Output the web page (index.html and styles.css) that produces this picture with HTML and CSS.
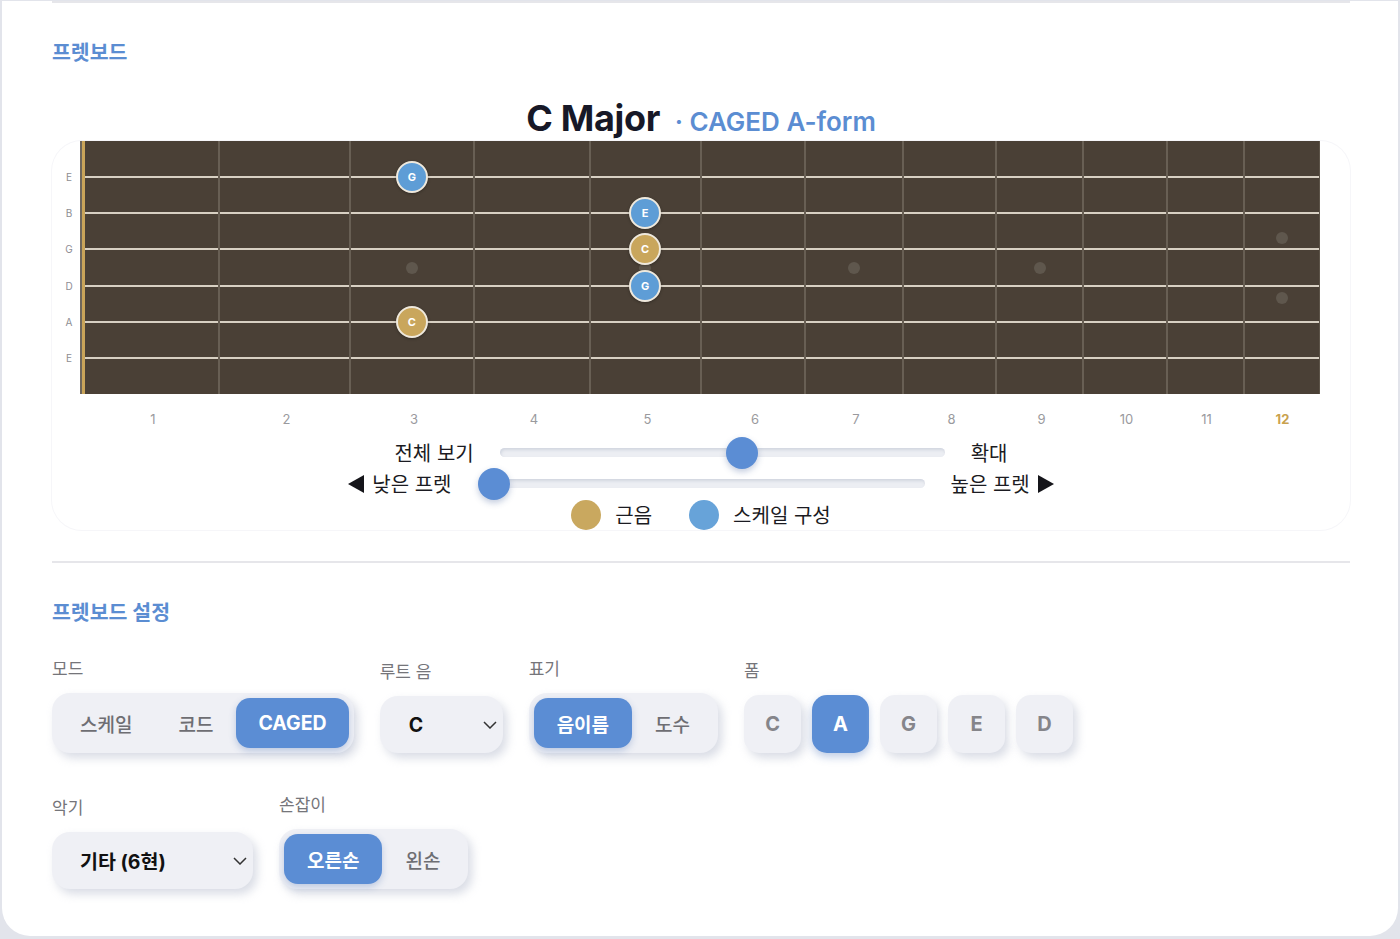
FILE: index.html
```html
<!DOCTYPE html>
<html lang="ko">
<head>
    <meta charset="UTF-8">
    <meta name="viewport" content="width=device-width, initial-scale=1.0">
    <title>프렛보드</title>
    <link rel="stylesheet" href="styles.css">
</head>
<body>
    <div class="card">
        <hr class="rule">

        <!-- Fretboard -->
        <h2 class="section-title">프렛보드</h2>
        <div class="chart-title">
            <span class="chart-name">C Major</span>
            <span class="chart-form">· CAGED A-form</span>
        </div>

        <div class="neck-panel">
            <div class="neck">
                <div class="string-names">
                    <span>E</span><span>B</span><span>G</span><span>D</span><span>A</span><span>E</span>
                </div>
                <div class="board">
                    <div class="nut"></div>
                    <div class="fret" style="flex-grow: 136"><i></i><i></i><i></i><i></i><i></i><i></i></div>
                    <div class="fret" style="flex-grow: 131"><i></i><i></i><i></i><i></i><i></i><i></i></div>
                    <div class="fret inlay" style="flex-grow: 124">
                        <i><b class="note scale">G</b></i><i></i><i></i><i></i><i><b class="note root">C</b></i><i></i>
                    </div>
                    <div class="fret" style="flex-grow: 116"><i></i><i></i><i></i><i></i><i></i><i></i></div>
                    <div class="fret inlay" style="flex-grow: 111">
                        <i></i><i><b class="note scale">E</b></i><i><b class="note root">C</b></i><i><b class="note scale">G</b></i><i></i><i></i>
                    </div>
                    <div class="fret" style="flex-grow: 104"><i></i><i></i><i></i><i></i><i></i><i></i></div>
                    <div class="fret inlay" style="flex-grow: 98"><i></i><i></i><i></i><i></i><i></i><i></i></div>
                    <div class="fret" style="flex-grow: 93"><i></i><i></i><i></i><i></i><i></i><i></i></div>
                    <div class="fret inlay" style="flex-grow: 87"><i></i><i></i><i></i><i></i><i></i><i></i></div>
                    <div class="fret" style="flex-grow: 83"><i></i><i></i><i></i><i></i><i></i><i></i></div>
                    <div class="fret" style="flex-grow: 77"><i></i><i></i><i></i><i></i><i></i><i></i></div>
                    <div class="fret double" style="flex-grow: 75"><i></i><i></i><i></i><i></i><i></i><i></i></div>
                </div>
            </div>

            <div class="fret-nums">
                <span style="flex-grow: 136">1</span>
                <span style="flex-grow: 131">2</span>
                <span style="flex-grow: 124">3</span>
                <span style="flex-grow: 116">4</span>
                <span style="flex-grow: 111">5</span>
                <span style="flex-grow: 104">6</span>
                <span style="flex-grow: 98">7</span>
                <span style="flex-grow: 93">8</span>
                <span style="flex-grow: 87">9</span>
                <span style="flex-grow: 83">10</span>
                <span style="flex-grow: 77">11</span>
                <span class="octave" style="flex-grow: 75">12</span>
            </div>

            <div class="slider-row">
                <span>전체 보기</span>
                <div class="track zoom"><div class="thumb" style="--v: 0.547"></div></div>
                <span>확대</span>
            </div>
            <div class="slider-row">
                <span class="arrow-label">
                    <svg width="16" height="18" viewBox="0 0 16 18"><path d="M16 0 L16 18 L0 9 Z" fill="#15151a"/></svg>
                    낮은 프렛
                </span>
                <div class="track pan"><div class="thumb" style="--v: 0"></div></div>
                <span class="arrow-label">
                    높은 프렛
                    <svg width="16" height="18" viewBox="0 0 16 18"><path d="M0 0 L0 18 L16 9 Z" fill="#15151a"/></svg>
                </span>
            </div>
            <div class="legend">
                <span class="legend-item"><i class="dot root"></i>근음</span>
                <span class="legend-item"><i class="dot scale"></i>스케일 구성</span>
            </div>
        </div>

        <hr class="rule">

        <!-- Settings -->
        <h2 class="section-title">프렛보드 설정</h2>

        <div class="field-row">
            <div class="field">
                <label>모드</label>
                <div class="seg">
                    <button>스케일</button>
                    <button>코드</button>
                    <button class="on latin">CAGED</button>
                </div>
            </div>
            <div class="field">
                <label>루트 음</label>
                <div class="select root-select">
                    <span>C</span>
                    <svg width="14" height="8" viewBox="0 0 14 8"><path d="M1 1 L7 7 L13 1" fill="none" stroke="#333" stroke-width="1.5"/></svg>
                </div>
            </div>
            <div class="field">
                <label>표기</label>
                <div class="seg">
                    <button class="on">음이름</button>
                    <button>도수</button>
                </div>
            </div>
            <div class="field">
                <label>폼</label>
                <div class="forms">
                    <button class="form-btn">C</button>
                    <button class="form-btn on">A</button>
                    <button class="form-btn">G</button>
                    <button class="form-btn">E</button>
                    <button class="form-btn">D</button>
                </div>
            </div>
        </div>

        <div class="field-row second">
            <div class="field">
                <label>악기</label>
                <div class="select inst-select">
                    <span>기타 (6현)</span>
                    <svg width="14" height="8" viewBox="0 0 14 8"><path d="M1 1 L7 7 L13 1" fill="none" stroke="#333" stroke-width="1.5"/></svg>
                </div>
            </div>
            <div class="field">
                <label>손잡이</label>
                <div class="seg">
                    <button class="on">오른손</button>
                    <button>왼손</button>
                </div>
            </div>
        </div>
    </div>
</body>
</html>
```

FILE: styles.css
```css
body {
    margin: 0;
    padding: 0;
    background: #e2e4eb;
    font-family: "Inter", "Noto Sans CJK KR", sans-serif;
    color: #1a1b2e;
}

.card {
    margin: 0 2px;
    padding: 0 48px 47px 50px;
    background: #fff;
    border-radius: 0 0 28px 28px;
}

.rule {
    margin: 1px 0 0;
    height: 2px;
    border: none;
    background: #e6e6ea;
}

.section-title {
    margin: 38px 0 0;
    font-size: 20.5px;
    line-height: 24px;
    font-weight: 700;
    color: #5b8dd2;
}

/* title above the neck */
.chart-title {
    margin-top: 31px;
    text-align: center;
    line-height: 44px;
    white-space: nowrap;
}

.chart-name {
    font-size: 36px;
    font-weight: 700;
    letter-spacing: -0.3px;
    color: #171827;
}

.chart-form {
    margin-left: 10px;
    font-size: 26px;
    font-weight: 600;
    color: #5b8dd2;
}

.neck-panel {
    margin-top: -6px;
    border-radius: 30px;
    box-shadow: 0 0 0 1px #f6f6f9;
}

.neck {
    display: flex;
    margin-right: 30px;
}

.string-names {
    width: 28px;
    padding: 18px 0;
    display: flex;
    flex-direction: column;
    box-sizing: border-box;
}

.string-names span {
    flex: 1;
    display: flex;
    align-items: center;
    justify-content: center;
    padding-left: 6px;
    font-size: 10px;
    color: #8d8d92;
}

.board {
    flex: 1;
    display: flex;
    height: 253px;
    background:
        linear-gradient(#d8d0c3, #d8d0c3) 0 35px / 100% 2px no-repeat,
        linear-gradient(#d8d0c3, #d8d0c3) 0 71px / 100% 2px no-repeat,
        linear-gradient(#d8d0c3, #d8d0c3) 0 107px / 100% 2px no-repeat,
        linear-gradient(#d8d0c3, #d8d0c3) 0 144px / 100% 2px no-repeat,
        linear-gradient(#d8d0c3, #d8d0c3) 0 180px / 100% 2px no-repeat,
        linear-gradient(#d8d0c3, #d8d0c3) 0 216px / 100% 2px no-repeat,
        #4a4036;
}

.nut {
    width: 5px;
    background: linear-gradient(to right, #6f675c 0 2px, #c9a459 2px);
}

.fret {
    position: relative;
    flex-basis: 0;
    display: flex;
    flex-direction: column;
    padding: 18px 0;
    border-right: 2px solid #685f54;
}

.fret:last-child {
    border-right: 1px solid #5c5348;
}

.fret i {
    flex: 1;
    display: flex;
    align-items: center;
    justify-content: center;
    z-index: 1;
    font-style: normal;
}

.fret.inlay::after,
.fret.double::before,
.fret.double::after {
    content: "";
    position: absolute;
    left: 50%;
    top: 50%;
    width: 12px;
    height: 12px;
    margin: -6px 0 0 -6px;
    border-radius: 50%;
    background: #5f574d;
}

.fret.double::before {
    margin-top: -36px;
}

.fret.double::after {
    margin-top: 24px;
}

.note {
    width: 28px;
    height: 28px;
    border: 2px solid #efe9dd;
    border-radius: 50%;
    display: flex;
    align-items: center;
    justify-content: center;
    font-size: 11px;
    font-weight: 700;
    color: #fff;
    box-shadow: 0 1px 3px rgba(0, 0, 0, 0.3);
}

.note.scale {
    background: #5e9dd6;
}

.note.root {
    background: #c9a65c;
}

.fret-nums {
    display: flex;
    margin: 15px 30px 0 33px;
    height: 20px;
}

.fret-nums span {
    flex-basis: 0;
    text-align: center;
    font-size: 13px;
    line-height: 20px;
    color: #9a9a9e;
}

.fret-nums .octave {
    color: #c9a24f;
    font-weight: 700;
}

/* zoom / pan sliders */
.slider-row {
    display: flex;
    justify-content: center;
    align-items: center;
    gap: 26px;
    height: 31px;
    font-size: 20px;
    color: #1b1b22;
}

.fret-nums + .slider-row {
    margin-top: 8px;
}

.arrow-label {
    display: flex;
    align-items: center;
    gap: 8px;
}

.track {
    position: relative;
    height: 9px;
    border-radius: 5px;
    background: #eceef3;
    box-shadow: inset 1px 2px 3px rgba(160, 168, 190, 0.35), 0 1px 2px rgba(255, 255, 255, 0.9);
}

.track.zoom {
    width: 445px;
}

.track.pan {
    width: 447px;
}

.thumb {
    position: absolute;
    top: 50%;
    left: calc(var(--v) * (100% - 32px));
    width: 32px;
    height: 32px;
    margin-top: -16px;
    border-radius: 50%;
    background: #5b8dd4;
    box-shadow: 0 3px 6px rgba(60, 90, 150, 0.3);
}

.legend {
    display: flex;
    justify-content: center;
    align-items: center;
    gap: 37px;
    height: 31px;
    font-size: 20px;
    color: #1b1b22;
}

.legend-item {
    display: flex;
    align-items: center;
    gap: 14px;
}

.dot {
    width: 30px;
    height: 30px;
    border-radius: 50%;
}

.dot.root {
    background: #c9a85f;
}

.dot.scale {
    background: #67a3d9;
}

.neck-panel + .rule {
    margin-top: 31px;
}

/* settings */
.field-row {
    display: flex;
    align-items: flex-end;
    gap: 26px;
    margin-top: 33px;
}

.field-row.second {
    margin-top: 41px;
}

.field {
    display: flex;
    flex-direction: column;
}

.field label {
    font-size: 17px;
    line-height: 22px;
    color: #75757a;
    margin-bottom: 13px;
}

.seg {
    display: inline-flex;
    align-self: flex-start;
    padding: 5px;
    border-radius: 18px;
    background: #eff0f5;
    box-shadow: 4px 5px 10px rgba(170, 178, 198, 0.45), -4px -4px 10px rgba(255, 255, 255, 0.9);
}

.seg button {
    height: 50px;
    padding: 0 23px;
    border: none;
    border-radius: 14px;
    background: transparent;
    font-family: inherit;
    font-size: 19px;
    font-weight: 500;
    color: #6e6e73;
}

.seg button.on {
    background: #5b8dd4;
    color: #fff;
    font-weight: 700;
    box-shadow: 0 3px 7px rgba(70, 110, 180, 0.3);
}

.seg button.latin {
    padding: 0 22px;
    font-size: 19.5px;
}

.select {
    display: flex;
    align-items: center;
    justify-content: space-between;
    height: 57px;
    box-sizing: border-box;
    border-radius: 18px;
    background: #eff0f5;
    box-shadow: 4px 5px 10px rgba(170, 178, 198, 0.45), -4px -4px 10px rgba(255, 255, 255, 0.9);
    font-size: 19.5px;
    font-weight: 700;
    color: #111;
}

.root-select {
    width: 123px;
    padding: 0 6px 0 29px;
}

.inst-select {
    width: 201px;
    padding: 0 6px 0 28px;
}

.forms {
    display: flex;
    gap: 11px;
}

.form-btn {
    width: 57px;
    height: 58px;
    border: none;
    border-radius: 15px;
    background: #eff0f5;
    box-shadow: 4px 5px 10px rgba(170, 178, 198, 0.45), -4px -4px 10px rgba(255, 255, 255, 0.9);
    font-family: inherit;
    font-size: 20px;
    font-weight: 700;
    color: #85858a;
}

.form-btn.on {
    background: #5b8dd4;
    color: #fff;
    box-shadow: 0 4px 8px rgba(70, 110, 180, 0.35);
}
```
